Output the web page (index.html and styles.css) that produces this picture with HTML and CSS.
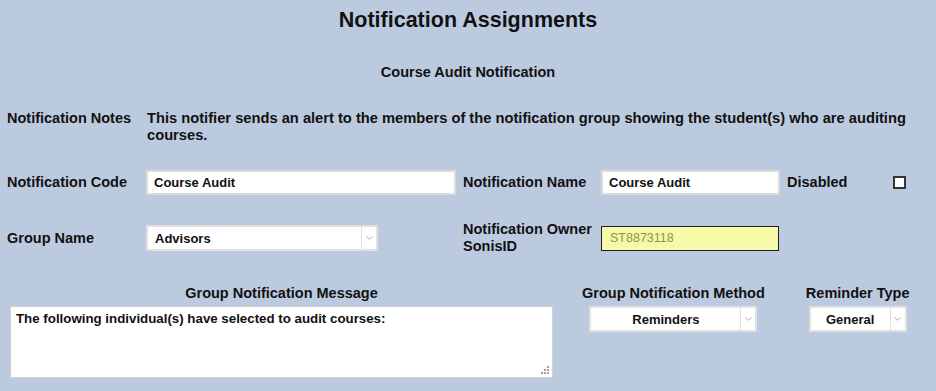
FILE: index.html
```html
<!DOCTYPE html>
<html lang="en">
<head>
    <meta charset="UTF-8">
    <title>Notification Assignments</title>
    <link rel="stylesheet" href="styles.css">
</head>
<body>
    <h1>Notification Assignments</h1>
    <h2>Course Audit Notification</h2>

    <div class="form">
        <div class="label top">Notification Notes</div>
        <div class="notes">This notifier sends an alert to the members of the notification group showing the student(s) who are auditing courses.</div>

        <label class="label" for="code">Notification Code</label>
        <div><input type="text" id="code" class="text code" value="Course Audit"></div>
        <label class="label" for="name">Notification Name</label>
        <div><input type="text" id="name" class="text name" value="Course Audit"></div>
        <label class="label" for="disabled">Disabled</label>
        <div><input type="checkbox" id="disabled" class="check"></div>

        <label class="label" for="group">Group Name</label>
        <div class="select group">
            <select id="group"><option>Advisors</option></select>
            <span class="arrow"><svg width="7" height="4" viewBox="0 0 7 4"><path d="M0.5 0.5 L3.5 3.2 L6.5 0.5" fill="none" stroke="#a8a8a8" stroke-width="1"/></svg></span>
        </div>
        <label class="label" for="owner">Notification Owner SonisID</label>
        <div><input type="text" id="owner" class="text owner" value="ST8873118" readonly></div>
    </div>

    <div class="bottom">
        <div class="col message">
            <label for="msg">Group Notification Message</label>
            <textarea id="msg">The following individual(s) have selected to audit courses:</textarea>
        </div>
        <div class="col">
            <label for="method">Group Notification Method</label>
            <div class="select method">
                <select id="method"><option>Reminders</option></select>
                <span class="arrow"><svg width="7" height="4" viewBox="0 0 7 4"><path d="M0.5 0.5 L3.5 3.2 L6.5 0.5" fill="none" stroke="#a8a8a8" stroke-width="1"/></svg></span>
            </div>
        </div>
        <div class="col">
            <label for="rtype">Reminder Type</label>
            <div class="select rtype">
                <select id="rtype"><option>General</option></select>
                <span class="arrow"><svg width="7" height="4" viewBox="0 0 7 4"><path d="M0.5 0.5 L3.5 3.2 L6.5 0.5" fill="none" stroke="#a8a8a8" stroke-width="1"/></svg></span>
            </div>
        </div>
    </div>
</body>
</html>
```

FILE: styles.css
```css
body {
    margin: 0;
    background-color: #bccae0;
    font-family: "Liberation Sans", Arial, sans-serif;
    font-size: 14.5px;
    font-weight: bold;
    color: #111;
}
h1 {
    margin: 0;
    padding-top: 8px;
    font-size: 21.5px;
    line-height: 24px;
    text-align: center;
}
h2 {
    margin: 32px 0 0;
    font-size: 14.5px;
    line-height: 16px;
    text-align: center;
}
.form {
    display: grid;
    grid-template-columns: 139px 317px 138px 186px 106px auto;
    align-items: center;
    row-gap: 26px;
    margin-top: 30px;
    padding: 0 20px 0 7px;
    line-height: 17px;
}
.label {
    display: block;
}
.label.top {
    align-self: start;
}
.notes {
    grid-column: 2 / -1;
    padding-left: 1px;
    font-size: 14.7px;
}
input.text {
    display: block;
    box-sizing: border-box;
    height: 25px;
    margin: 0;
    padding: 0 6px;
    border: 2px solid #dcdcdc;
    background: #fff;
    font-family: inherit;
    font-size: 13px;
    font-weight: bold;
    color: #111;
    outline: none;
}
input.code {
    width: 310px;
}
input.name {
    width: 179px;
}
input.owner {
    width: 178px;
    border: 1px solid #1d1d2a;
    background: #f6f9a6;
    color: #939348;
    padding-left: 8px;
    font-weight: normal;
    font-size: 12.5px;
}
.check {
    appearance: none;
    display: block;
    width: 13px;
    height: 13px;
    margin: 0;
    border: 2px solid #333;
    background: #fff;
}
.select {
    display: flex;
    box-sizing: border-box;
    height: 26px;
    border: 2px solid #e0e0e0;
    background: #fff;
}
.select select {
    appearance: none;
    flex: 1;
    min-width: 0;
    margin: 0;
    border: none;
    background: transparent;
    font-family: inherit;
    font-size: 13px;
    font-weight: bold;
    color: #111;
    outline: none;
}
.select .arrow {
    display: flex;
    align-items: center;
    justify-content: center;
    width: 14px;
    border-left: 1px solid #e0e0e0;
}
.select.group {
    width: 232px;
}
.select.group select {
    padding-left: 7px;
}
.select.method {
    width: 168px;
}
.select.rtype {
    width: 98px;
}
.select.method select,
.select.rtype select {
    text-align: center;
    text-align-last: center;
}
.bottom {
    display: flex;
    align-items: flex-start;
    margin-top: 30px;
    padding-left: 10px;
    line-height: 16px;
}
.col {
    display: flex;
    flex-direction: column;
    align-items: center;
    gap: 5px;
}
.col.message {
    width: 543px;
    margin-right: 29px;
}
.col + .col {
    margin-right: 41px;
}
.col:last-child {
    margin-right: 0;
}
textarea {
    box-sizing: border-box;
    width: 543px;
    height: 72px;
    margin: 0;
    padding: 4px 5px;
    border: 1px solid #d0d0d0;
    background: #fff url("data:image/svg+xml,%3Csvg xmlns='http://www.w3.org/2000/svg' width='8' height='8'%3E%3Cg fill='%23a0a0a0'%3E%3Crect x='6' y='0' width='2' height='2'/%3E%3Crect x='3' y='3' width='2' height='2'/%3E%3Crect x='6' y='3' width='2' height='2'/%3E%3Crect x='0' y='6' width='2' height='2'/%3E%3Crect x='3' y='6' width='2' height='2'/%3E%3Crect x='6' y='6' width='2' height='2'/%3E%3C/g%3E%3C/svg%3E") no-repeat right 3px bottom 3px;
    font-family: inherit;
    font-size: 13.3px;
    font-weight: bold;
    color: #111;
    resize: none;
    outline: none;
}
```
